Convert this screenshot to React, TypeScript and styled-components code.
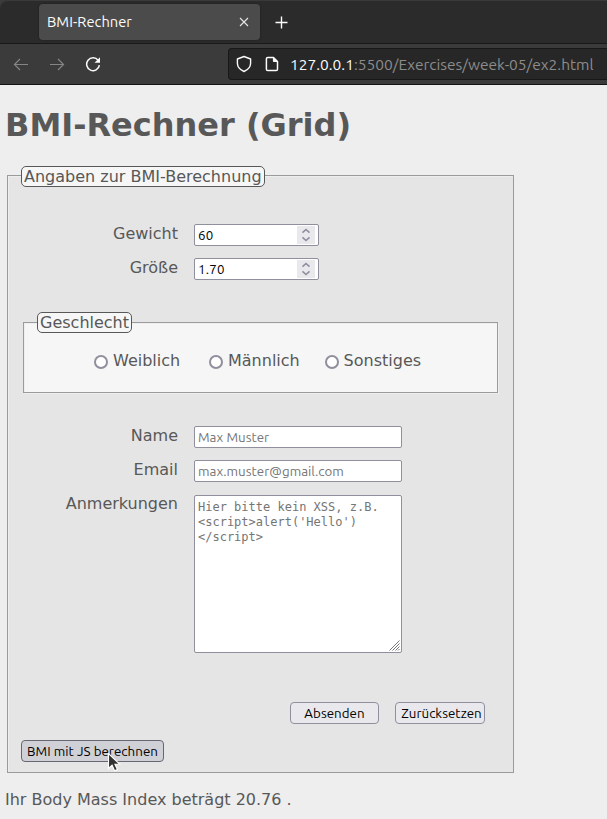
import React from "react";
import styled, { createGlobalStyle } from "styled-components";

const GlobalStyle = createGlobalStyle`
  * { box-sizing: border-box; }
  html { overflow: hidden; }
  body {
    margin: 0;
    background: #eeeeee;
    color: #585858;
    font: 16px/19px "DejaVu Sans", sans-serif;
  }
`;

const ui = `"Ubuntu", "Noto Sans", sans-serif`;

const Browser = styled.header`
  display: flex;
  flex-direction: column;
  height: 85px;
  background: #3b3b3b;
  border-bottom: 1px solid #131313;
`;

const TabBar = styled.div`
  display: flex;
  align-items: flex-start;
  height: 44px;
  padding: 3px 0 0 39px;
  background: #2b2b2b;
  border-top: 1px solid #3a3a3a;
  border-bottom: 1px solid #191919;
  border-top-left-radius: 8px;
`;

const Tab = styled.div`
  display: flex;
  align-items: center;
  justify-content: space-between;
  width: 221px;
  height: 36px;
  padding: 0 11px 0 8px;
  border-radius: 4px;
  background: #4b4b4b;
  box-shadow: 0 0 2px #1d1d1d;
  color: #fbfbfb;
  font: 14.67px/20px ${ui};
  letter-spacing: 0.05px;
`;

const NewTab = styled.svg`
  margin: 12px 0 0 15px;
`;

const NavBar = styled.div`
  display: flex;
  align-items: center;
  height: 40px;
  padding-left: 13px;
`;

const NavIcons = styled.div`
  display: flex;
  gap: 20px;
  width: 215px;
`;

const AddressBar = styled.div`
  display: flex;
  align-items: center;
  flex: 1;
  height: 32px;
  padding-left: 7px;
  border: 1px solid #181818;
  border-right: 0;
  border-radius: 4px 0 0 4px;
  background: #272727;
`;

const PageIcon = styled.svg`
  margin-left: 13px;
`;

const Url = styled.span`
  margin: 2px 0 0 11px;
  color: #8c8c8c;
  font: 15.5px/20px ${ui};
  white-space: nowrap;
`;

const Host = styled.span`
  color: #fbfbfb;
`;

const Page = styled.main`
  height: 734px;
  padding: 22px 0 0 5px;
`;

const Title = styled.h1`
  margin: 0;
  font-size: 32px;
  line-height: 37px;
  font-weight: bold;
`;

const Caption = styled.legend`
  height: 21px;
  padding: 0 2px;
  border: 1px solid #585858;
  border-radius: 5px;
  background: #f6f6f6;
  line-height: 19px;
`;

const Group = styled.fieldset<{ $inner?: boolean }>`
  min-width: 0;
  width: ${p => (p.$inner ? 475 : 507)}px;
  height: ${p => (p.$inner ? 81 : 608)}px;
  margin: ${p => (p.$inner ? "32px 0 0 2px" : "21px 0 0 2px")};
  padding: 0 13px;
  border: 1px solid #9b9b9b;
  background: ${p => (p.$inner ? "#f6f6f6" : "#e5e5e5")};
  box-shadow: inset 1px 1px #eeeeee, 1px 1px #eeeeee;
  > ${Caption} { transform: ${p => (p.$inner ? "none" : "translateY(1px)")}; }
`;

const Fields = styled.div<{ $top: number }>`
  display: grid;
  grid-template-columns: 157px 208px;
  column-gap: 16px;
  row-gap: 12px;
  padding-top: ${p => p.$top}px;
`;

const Label = styled.label`
  text-align: right;
`;

const Input = styled.input`
  display: block;
  width: 100%;
  height: 22px;
  padding: 1px 3px 0;
  border: 1px solid #8f8f9d;
  border-radius: 2px;
  outline: 0;
  background: #fff;
  color: #000;
  font: 13.33px/18px ${ui};
  letter-spacing: 0.04px;
  &::placeholder { color: #757575; opacity: 1; }
`;

const NumberBox = styled.div`
  display: flex;
  align-items: center;
  width: 125px;
  height: 22px;
  padding-right: 3px;
  border: 1px solid #8f8f9d;
  border-radius: 2px;
  background: #fff;
  ${Input} { flex: 1; min-width: 0; height: 20px; border: 0; background: none; letter-spacing: 0.2px; }
`;

const Spinner = styled.svg`
  flex: none;
  background: #e9e9ed;
`;

const NoteBox = styled.div`
  position: relative;
  height: 158px;
  margin-top: 1px;
`;

const Notes = styled.textarea`
  display: block;
  width: 100%;
  height: 100%;
  padding: 4px 3px 3px;
  border: 1px solid #8f8f9d;
  border-radius: 2px;
  outline: 0;
  resize: none;
  overflow: hidden;
  background: #fff;
  font: 12px/15px "DejaVu Sans Mono", monospace;
  &::placeholder { color: #757575; opacity: 1; }
`;

const Grip = styled.svg`
  position: absolute;
  right: 2px;
  bottom: 2px;
`;

const Choices = styled.div`
  display: flex;
  padding: 18px 0 0 57px;
`;

const Choice = styled.label<{ $width: number }>`
  display: flex;
  width: ${p => p.$width}px;
  gap: 5px;
`;

const Radio = styled.input`
  appearance: none;
  width: 14px;
  height: 14px;
  margin: 4px 0 0;
  border: 2px solid #8f8f9d;
  border-radius: 50%;
  background: #fff;
`;

const Actions = styled.div`
  display: flex;
  gap: 16px;
  padding: 49px 0 0 269px;
`;

const Button = styled.button<{ $width: number; $indent?: number; $hover?: boolean }>`
  display: flex;
  justify-content: center;
  width: ${p => p.$width}px;
  height: 22px;
  padding: 2px 0 0 ${p => p.$indent ?? 0}px;
  border: 1px solid ${p => (p.$hover ? "#676774" : "#8f8f9d")};
  border-radius: 4px;
  background: ${p => (p.$hover ? "#d0d0d7" : "#e9e9ed")};
  color: #000;
  font: 13.33px/18px ${ui};
  letter-spacing: 0.04px;
  white-space: nowrap;
`;

const Calculate = styled.div`
  position: relative;
  width: 143px;
  margin-top: 16px;
`;

const Pointer = styled.svg`
  position: absolute;
  left: 86px;
  top: 12px;
`;

const Result = styled.p`
  margin: 17px 0 0;
`;

const NumberField = ({ id, value }: { id: string; value: string }) => (
  <NumberBox>
    <Input id={id} defaultValue={value} />
    <Spinner width="18" height="18" viewBox="0 0 18 18" fill="none" stroke="#8f8f9d" strokeWidth="1.6">
      <path d="M5.5 6.7 9 3.5l3.5 3.2M5.5 11.3 9 14.5l3.5-3.2" />
    </Spinner>
  </NumberBox>
);

export default function App() {
  return (
    <>
      <GlobalStyle />
      <Browser>
        <TabBar>
          <Tab>
            BMI-Rechner
            <svg width="10" height="10" viewBox="0 0 10 10" stroke="#e6e6e6" strokeWidth="1.1">
              <path d="m1 1 8 8M9 1 1 9" />
            </svg>
          </Tab>
          <NewTab width="14" height="14" viewBox="0 0 14 14" stroke="#fbfbfb" strokeWidth="1.4">
            <path d="M.5 6.5h12M6.5 .5v12" />
          </NewTab>
        </TabBar>
        <NavBar>
          <NavIcons>
            <svg width="16" height="16" viewBox="0 0 16 16" fill="none" stroke="#858585" strokeWidth="1.2">
              <path d="M15 8.5H1.5M7 3 1.5 8.5 7 14" />
            </svg>
            <svg width="16" height="16" viewBox="0 0 16 16" fill="none" stroke="#858585" strokeWidth="1.2">
              <path d="M1 8.5h13.5M9 3l5.5 5.5L9 14" />
            </svg>
            <svg width="16" height="16" viewBox="0 0 16 16" fill="none" stroke="#fbfbfb" strokeWidth="1.5">
              <path d="M13.2 4.4A6.4 6.4 0 1 0 14.4 9.2" />
              <path d="M15 1.2v5.5H9.5z" fill="#fbfbfb" stroke="none" />
            </svg>
          </NavIcons>
          <AddressBar>
            <svg width="16" height="18" viewBox="0 0 16 18" fill="none" stroke="#fbfbfb" strokeWidth="1.4" strokeLinejoin="round">
              <path d="M8 1.5 14.6 4v4.2c0 3.7-2.9 6.6-6.6 8.3-3.7-1.7-6.6-4.6-6.6-8.3V4z" />
            </svg>
            <PageIcon width="14" height="16" viewBox="0 0 14 16" fill="none" stroke="#fbfbfb" strokeWidth="1.5" strokeLinejoin="round">
              <path d="M2.7 1.5h5.8l4 4v7.7c0 .8-.5 1.3-1.3 1.3H2.7c-.8 0-1.3-.5-1.3-1.3V2.8c0-.8.5-1.3 1.3-1.3z" />
              <path d="M8.4 1.5v4h4z" fill="#fbfbfb" strokeWidth="1" />
            </PageIcon>
            <Url><Host>127.0.0.1</Host>:5500/Exercises/week-05/ex2.html</Url>
          </AddressBar>
        </NavBar>
      </Browser>
      <Page>
        <Title>BMI-Rechner (Grid)</Title>
        <Group>
          <Caption>Angaben zur BMI-Berechnung</Caption>
          <Fields $top={38}>
            <Label htmlFor="weight">Gewicht</Label>
            <NumberField id="weight" value="60" />
            <Label htmlFor="height">Größe</Label>
            <NumberField id="height" value="1.70" />
          </Fields>
          <Group $inner>
            <Caption>Geschlecht</Caption>
            <Choices>
              <Choice $width={115}><Radio type="radio" name="sex" />Weiblich</Choice>
              <Choice $width={115.6}><Radio type="radio" name="sex" />Männlich</Choice>
              <Choice $width={110}><Radio type="radio" name="sex" />Sonstiges</Choice>
            </Choices>
          </Group>
          <Fields $top={33}>
            <Label htmlFor="name">Name</Label>
            <Input id="name" placeholder="Max Muster" />
            <Label htmlFor="email">Email</Label>
            <Input id="email" placeholder="max.muster@gmail.com" />
            <Label htmlFor="notes">Anmerkungen</Label>
            <NoteBox>
              <Notes id="notes" placeholder={"Hier bitte kein XSS, z.B.\n<script>alert('Hello')\n</script>"} />
              <Grip width="11" height="11" viewBox="0 0 11 11" stroke="#777" strokeWidth="1">
                <path d="M0.5 10.5l10-10M3.5 10.5l7-7M6.5 10.5l4-4M9 10.5l1.5-1.5" />
              </Grip>
            </NoteBox>
          </Fields>
          <Actions>
            <Button $width={89}>Absenden</Button>
            <Button $width={90} $indent={3}>Zurücksetzen</Button>
          </Actions>
          <Calculate>
            <Button $width={143} $hover>BMI mit JS berechnen</Button>
            <Pointer width="15" height="21" viewBox="0 0 15 21">
              <path d="M1.5 1.5v15l3.6-3.3 2.5 5.6 2.8-1.2-2.5-5.4h4.8z" fill="#333" stroke="#fff" strokeWidth="1.1" />
            </Pointer>
          </Calculate>
        </Group>
        <Result>Ihr Body Mass Index beträgt 20.76 .</Result>
      </Page>
    </>
  );
}
